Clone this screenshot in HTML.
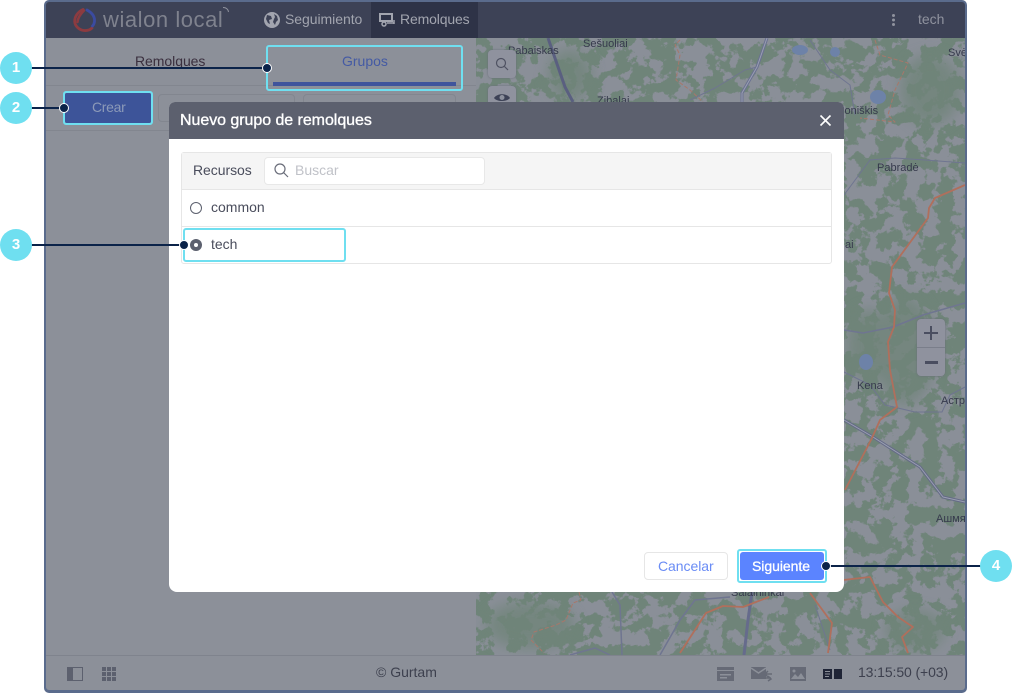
<!DOCTYPE html>
<html><head><meta charset="utf-8">
<style>
*{box-sizing:border-box}
html,body{margin:0;padding:0;background:#fff}
body{width:1012px;height:693px;position:relative;overflow:hidden;font-family:"Liberation Sans",sans-serif;font-size:14px}
.a{position:absolute}
.t{position:absolute;white-space:nowrap;line-height:16px}
.hl{position:absolute;border:2px solid #6fdff0;border-radius:3px}
.c{position:absolute;width:32px;height:32px;border-radius:50%;background:#6fdff0;color:#fff;font-weight:bold;font-size:15px;line-height:32px;text-align:center}
.l{position:absolute;height:2px;background:#0b2349}
.d{position:absolute;width:8px;height:8px;border-radius:50%;background:#0b2349;border:1px solid #fff;box-sizing:content-box}
.mb{position:absolute;width:28px;height:28px;background:#8f929e;border-radius:4px;box-shadow:0 0 2px #6a6e7a}
</style></head><body>
<div class="a" style="left:44px;top:0;width:923px;height:693px;background:#5a6b8c;border-radius:5px"></div>
<svg class="a" style="left:476px;top:38px" width="489" height="617" viewBox="476 38 489 617">
<defs>
<filter id="n" x="0" y="0" width="100%" height="100%" color-interpolation-filters="sRGB">
<feTurbulence type="fractalNoise" baseFrequency="0.065" numOctaves="5" seed="11"/>
<feColorMatrix values="0 0 0 0 0.54 0 0 0 0 0.56 0 0 0 0 0.595 1.6 0 0 0 -0.32"/>
<feComponentTransfer><feFuncA type="linear" slope="12" intercept="-5.5"/></feComponentTransfer>
</filter>
<filter id="b" x="-30%" y="-30%" width="160%" height="160%"><feGaussianBlur stdDeviation="7"/></filter>
</defs>
<rect x="476" y="38" width="489" height="617" fill="#6f8479"/>
<rect x="476" y="38" width="489" height="617" filter="url(#n)"/>
<g fill="#6f8479" filter="url(#b)" opacity=".8">
<ellipse cx="530" cy="625" rx="45" ry="24"/><ellipse cx="905" cy="350" rx="30" ry="55"/><ellipse cx="868" cy="345" rx="22" ry="36"/><ellipse cx="915" cy="630" rx="30" ry="20"/><ellipse cx="570" cy="75" rx="22" ry="26"/><ellipse cx="930" cy="90" rx="30" ry="35"/>
</g>
<g fill="#6d82a8">
<ellipse cx="866" cy="362" rx="7" ry="8"/><ellipse cx="800" cy="50" rx="8" ry="5"/><ellipse cx="835" cy="52" rx="5" ry="5"/><ellipse cx="878" cy="97" rx="8" ry="7"/>
</g>
<g fill="none" stroke="#6f7590" stroke-width="1" stroke-linejoin="round">
<path d="M844 330L863 333 893 327 923 315 965 303" stroke-width="1.500"/>
<path d="M965 163L925 160 895 158 870 160 844 195"/>
<path d="M810 40L830 70 850 85 855 115"/>
<path d="M690 100L715 88 745 70 757 67"/>
<path d="M844 372L870 385 885 405 915 412 942 412 950 395 965 387"/>
<path d="M612 592L620 605 622 655" stroke-width="1.500"/>
<path d="M660 655L680 620 695 600 730 597" stroke-width="1.500"/>
<path d="M570 655L595 648 610 655" stroke-width="1.500"/>
<path d="M815 605L830 650"/>
</g>
<g fill="none" stroke-linejoin="round">
<path d="M548 38L565 87 573 102" stroke="#5a5f80" stroke-width="3"/>
<path d="M767 38L757 67 742 93 742 104" stroke="#6a7092" stroke-width="3"/>
<path d="M767 38L757 67 742 93 742 104" stroke="#9aa0b0" stroke-width="1"/>
<path d="M844 420L873 437 920 467 943 497 965 502" stroke="#656a88" stroke-width="3"/>
<path d="M844 420L873 437 920 467 943 497 965 502" stroke="#9aa0b0" stroke-width="1"/>
<path d="M752 592L748 620 744 655" stroke="#666b8c" stroke-width="3"/>
<path d="M965 185L935 198 929 208 928 218 892 267 889 293 895 310 894 327 888 342 890 370 897 407 880 420 872 438 845 490" stroke="#b06f5c" stroke-width="1.800"/>
<path d="M843 580L870 577 883 602 898 617 913 627 902 637 908 653" stroke="#b06f5c" stroke-width="1.800"/>
<path d="M810 593L832 623 828 653" stroke="#b06f5c" stroke-width="1.800"/>
<path d="M680 653L706 613 723 606 743 607 769 597" stroke="#b06f5c" stroke-width="1.800"/>
<path d="M680 40L675 45 680 55 676 80 690 90 703 102" stroke="#a8776a" stroke-width="1" stroke-dasharray="4 2"/>
<path d="M875 40L880 55 908 63 895 90 888 115 895 122 860 118" stroke="#a8776a" stroke-width="1" stroke-dasharray="4 2"/>
<path d="M579 592L581 600 573 603 566 620 556 625 534 632 531 640 544 653" stroke="#a8776a" stroke-width="1" stroke-dasharray="4 2"/>
</g>
<g font-family="'Liberation Sans',sans-serif" font-size="11" fill="#363a4c">
<text x="508" y="54">Pabaiskas</text><text x="583" y="47">Sešuoliai</text><text x="597" y="104">Zibalai</text><text x="948" y="56">Svė</text>
<text x="839" y="114">Joniškis</text><text x="877" y="171">Pabradė</text><text x="845" y="248">ai</text><text x="857" y="389">Kena</text><text x="941" y="404">Астр</text><text x="936" y="522">Ашмя</text><text x="731" y="596">Salaininkai</text>
</g>
</svg>
<!-- left panel -->
<div class="a" style="left:46px;top:38px;width:430px;height:617px;background:#8c9099"></div>
<div class="a" style="left:46px;top:85px;width:430px;height:1px;background:#82868f"></div>
<div class="a" style="left:46px;top:130px;width:430px;height:1px;background:#82868f"></div>
<div class="t" style="left:135px;top:53px;color:#3a2f3e;letter-spacing:-.05px">Remolques</div>
<div class="t" style="left:342px;top:53px;color:#445aa4">Grupos</div>
<div class="a" style="left:273px;top:82px;width:183px;height:4px;background:#3f549c"></div>
<div class="a" style="left:158px;top:94px;width:137px;height:28px;border:1px solid #82868f;border-radius:4px"></div>
<div class="a" style="left:303px;top:94px;width:153px;height:28px;border:1px solid #82868f;border-radius:4px"></div>
<div class="a" style="left:65px;top:93px;width:86px;height:30px;background:#3d5499;border-radius:2px"></div>
<div class="t" style="left:92px;top:99px;color:#8c9ab8;letter-spacing:-.3px">Crear</div>
<!-- top bar -->
<div class="a" style="left:46px;top:2px;width:919px;height:36px;background:#3d4256;border-radius:3px 3px 0 0"></div>
<div class="a" style="left:371px;top:2px;width:107px;height:36px;background:#2e3347"></div>
<svg class="a" style="left:72px;top:7px" width="26" height="26" viewBox="0 0 26 26" fill="none" stroke-linecap="round">
<path d="M11 2.500C5.500 5 2.500 10 2.700 14.500 3 19 7 23 12 23.500 15.500 23.800 18 23 20 21" stroke="#8c3b40" stroke-width="2.800"/>
<path d="M12 3.500C8.500 7 5.800 11 5.500 15" stroke="#8c3b40" stroke-width="2.500"/>
<path d="M15 3C19.500 5.500 23 9.500 22.500 14.500 22.300 16.500 21.500 18 20.500 19" stroke="#3b4ba0" stroke-width="2.800"/>
</svg>
<div class="t" style="left:103px;top:7px;color:#7f828e;font-size:22px;line-height:26px;letter-spacing:.55px">wialon local</div>
<svg class="a" style="left:222px;top:6px" width="8" height="8" fill="none" stroke="#8f929e"><path d="M1 1.500C4 1.500 6 3 6.500 6"/></svg>
<svg class="a" style="left:264px;top:12px" width="16" height="16" viewBox="0 0 16 16"><circle cx="8" cy="8" r="8" fill="#a2a5af"/><path d="M3 3l4 1 1 3-3 1 1 4-2-1-2-4zM10 2l3 2 1 4-2 2-1 3-2-3 1-3 1-2z" fill="#3d4256"/></svg>
<div class="t" style="left:285px;top:11px;color:#a2a5af;letter-spacing:-.05px">Seguimiento</div>
<svg class="a" style="left:379px;top:13px" width="17" height="14" viewBox="0 0 17 14"><path d="M1 1h12v7H1z" fill="none" stroke="#a2a5af" stroke-width="2"/><circle cx="5" cy="11" r="2" fill="none" stroke="#a2a5af" stroke-width="1.500"/><path d="M8 10h7M15 7v4" stroke="#a2a5af" stroke-width="1.500"/></svg>
<div class="t" style="left:400px;top:11px;color:#a2a5af;letter-spacing:-.15px">Remolques</div>
<div class="a" style="left:892px;top:14px;width:3px;height:3px;background:#8f929e;border-radius:50%;box-shadow:0 4.500px #8f929e,0 9px #8f929e"></div>
<div class="t" style="left:918px;top:11px;color:#8f929e">tech</div>
<!-- map buttons -->
<div class="mb" style="left:488px;top:50px"></div>
<svg class="a" style="left:495px;top:57px" width="14" height="14" fill="none" stroke="#4f5262" stroke-width="1.200"><circle cx="6" cy="6" r="4.500"/><path d="M9.500 9.500L13 13"/></svg>
<div class="mb" style="left:488px;top:86px"></div>
<svg class="a" style="left:494px;top:92px" width="16" height="10"><path d="M0 6C3 1 13 1 16 6 13 10 3 10 0 6z" fill="#3d4256"/><circle cx="8" cy="5.500" r="2.500" fill="#8d919d"/></svg>
<div class="a" style="left:917px;top:319px;width:28px;height:57px;background:#8f929e;border-radius:4px;box-shadow:0 0 2px #6a6e7a"></div>
<div class="a" style="left:917px;top:347px;width:28px;height:1px;background:#7a7e8a"></div>
<div class="a" style="left:924px;top:332px;width:14px;height:2px;background:#4a4e60"></div>
<div class="a" style="left:930px;top:326px;width:2px;height:14px;background:#4a4e60"></div>
<div class="a" style="left:925px;top:361px;width:13px;height:3px;background:#4a4e60"></div>
<!-- footer -->
<div class="a" style="left:46px;top:655px;width:919px;height:35px;background:#8c9099;border-top:1px solid #7f838d;border-radius:0 0 3px 3px"></div>
<svg class="a" style="left:67px;top:667px" width="17" height="15"><rect x=".5" y=".5" width="15" height="13" fill="none" stroke="#5c606e"/><rect x="1" y="1" width="5" height="12" fill="#5c606e"/></svg>
<svg class="a" style="left:102px;top:667px" width="15" height="14" fill="#5c606e"><rect width="4" height="4"/><rect x="5" width="4" height="4"/><rect x="10" width="4" height="4"/><rect y="5" width="4" height="4"/><rect x="5" y="5" width="4" height="4"/><rect x="10" y="5" width="4" height="4"/><rect y="10" width="4" height="4"/><rect x="5" y="10" width="4" height="4"/><rect x="10" y="10" width="4" height="4"/></svg>
<div class="t" style="left:376px;top:664px;color:#3d404e">© Gurtam</div>
<svg class="a" style="left:717px;top:667px" width="18" height="15"><rect width="17" height="14" fill="#666a76"/><rect y="3" width="17" height="1" fill="#8c9099"/><rect x="3" y="7" width="11" height="1.500" fill="#8c9099"/><rect x="3" y="10" width="7" height="1.500" fill="#8c9099"/></svg>
<svg class="a" style="left:750px;top:667px" width="24" height="15"><path d="M1 0h15v12H1z" fill="#666a76"/><path d="M1 1l7.500 5L16 1" stroke="#8c9099" fill="none" stroke-width="1.500"/><path d="M15 7h7M18 4l-3 3 3 3M15 11h6M18 9l3 3-3 2" stroke="#666a76" fill="none" stroke-width="1.500"/></svg>
<svg class="a" style="left:790px;top:667px" width="16" height="15"><rect width="16" height="14" fill="#666a76"/><path d="M1 12l4-5 3 3 3-4 4 6z" fill="#8c9099"/><circle cx="4" cy="4" r="1.500" fill="#8c9099"/></svg>
<svg class="a" style="left:823px;top:669px" width="19" height="11"><rect width="9" height="10" fill="#1f2436"/><rect x="11" width="8" height="10" fill="#1f2436"/><path d="M2 2.500h5M2 5h5M2 7.500h4" stroke="#8c9099"/></svg>
<div class="t" style="left:858px;top:664px;color:#3d404e;letter-spacing:-.1px">13:15:50 (+03)</div>
<!-- modal -->
<div class="a" style="left:169px;top:102px;width:675px;height:490px;background:#fff;border-radius:6px 6px 8px 8px;overflow:hidden">
<div class="a" style="left:0;top:0;width:675px;height:37px;background:#5c606e"></div>
<div class="t" style="left:11px;top:11px;color:#fff;font-size:16px;-webkit-text-stroke:.35px #fff;letter-spacing:-.05px">Nuevo grupo de remolques</div>
<svg class="a" style="left:650px;top:12px" width="13" height="13" stroke="#fff" stroke-width="1.600"><path d="M1.500 1.500l10 10M11.500 1.500l-10 10"/></svg>
<div class="a" style="left:12px;top:50px;width:651px;height:112px;border:1px solid #e6e6e6;border-radius:3px"></div>
<div class="a" style="left:13px;top:51px;width:649px;height:37px;background:#f5f5f5;border-bottom:1px solid #e6e6e6"></div>
<div class="a" style="left:13px;top:124px;width:649px;height:1px;background:#e6e6e6"></div>
<div class="t" style="left:24px;top:60px;color:#4a4d5c;letter-spacing:-.05px">Recursos</div>
<div class="a" style="left:95px;top:55px;width:221px;height:28px;background:#fff;border:1px solid #e8e8e8;border-radius:4px"></div>
<svg class="a" style="left:105px;top:61px" width="15" height="15" fill="none" stroke="#6a6d7a" stroke-width="1.200"><circle cx="6" cy="6" r="5"/><path d="M9.500 9.500L14 14"/></svg>
<div class="t" style="left:126px;top:60px;color:#c0c2c8">Buscar</div>
<div class="a" style="left:21px;top:100px;width:12px;height:12px;border:1.200px solid #5c606e;border-radius:50%"></div>
<div class="t" style="left:42px;top:97px;color:#4a4d5c">common</div>
<div class="a" style="left:21px;top:137px;width:12px;height:12px;background:#5c606e;border-radius:50%"></div>
<div class="a" style="left:25px;top:141px;width:4px;height:4px;background:#fff;border-radius:50%"></div>
<div class="t" style="left:42px;top:134px;color:#4a4d5c">tech</div>
<div class="a" style="left:475px;top:450px;width:84px;height:28px;background:#fff;border:1px solid #e6e6e6;border-radius:4px"></div>
<div class="t" style="left:489px;top:456px;color:#6a8cf5;letter-spacing:-.05px">Cancelar</div>
<div class="a" style="left:571px;top:450px;width:84px;height:28px;background:#5b84ff;border-radius:3px"></div>
<div class="t" style="left:583px;top:456px;color:#fff;-webkit-text-stroke:.3px #fff;letter-spacing:-.05px">Siguiente</div>
</div>
<!-- callouts -->
<div class="hl" style="left:266px;top:45px;width:197px;height:46px"></div>
<div class="hl" style="left:63px;top:91px;width:90px;height:34px"></div>
<div class="hl" style="left:183px;top:228px;width:163px;height:34px"></div>
<div class="hl" style="left:737px;top:549px;width:90px;height:34px"></div>
<div class="l" style="left:30px;top:67px;width:237px"></div>
<div class="l" style="left:30px;top:107px;width:34px"></div>
<div class="l" style="left:30px;top:244px;width:154px"></div>
<div class="l" style="left:826px;top:565px;width:155px"></div>
<div class="d" style="left:262px;top:63px"></div>
<div class="d" style="left:59px;top:103px"></div>
<div class="d" style="left:179px;top:240px"></div>
<div class="d" style="left:821px;top:561px"></div>
<div class="c" style="left:0;top:52px">1</div>
<div class="c" style="left:0;top:92px">2</div>
<div class="c" style="left:0;top:229px">3</div>
<div class="c" style="left:980px;top:550px">4</div>
</body></html>
